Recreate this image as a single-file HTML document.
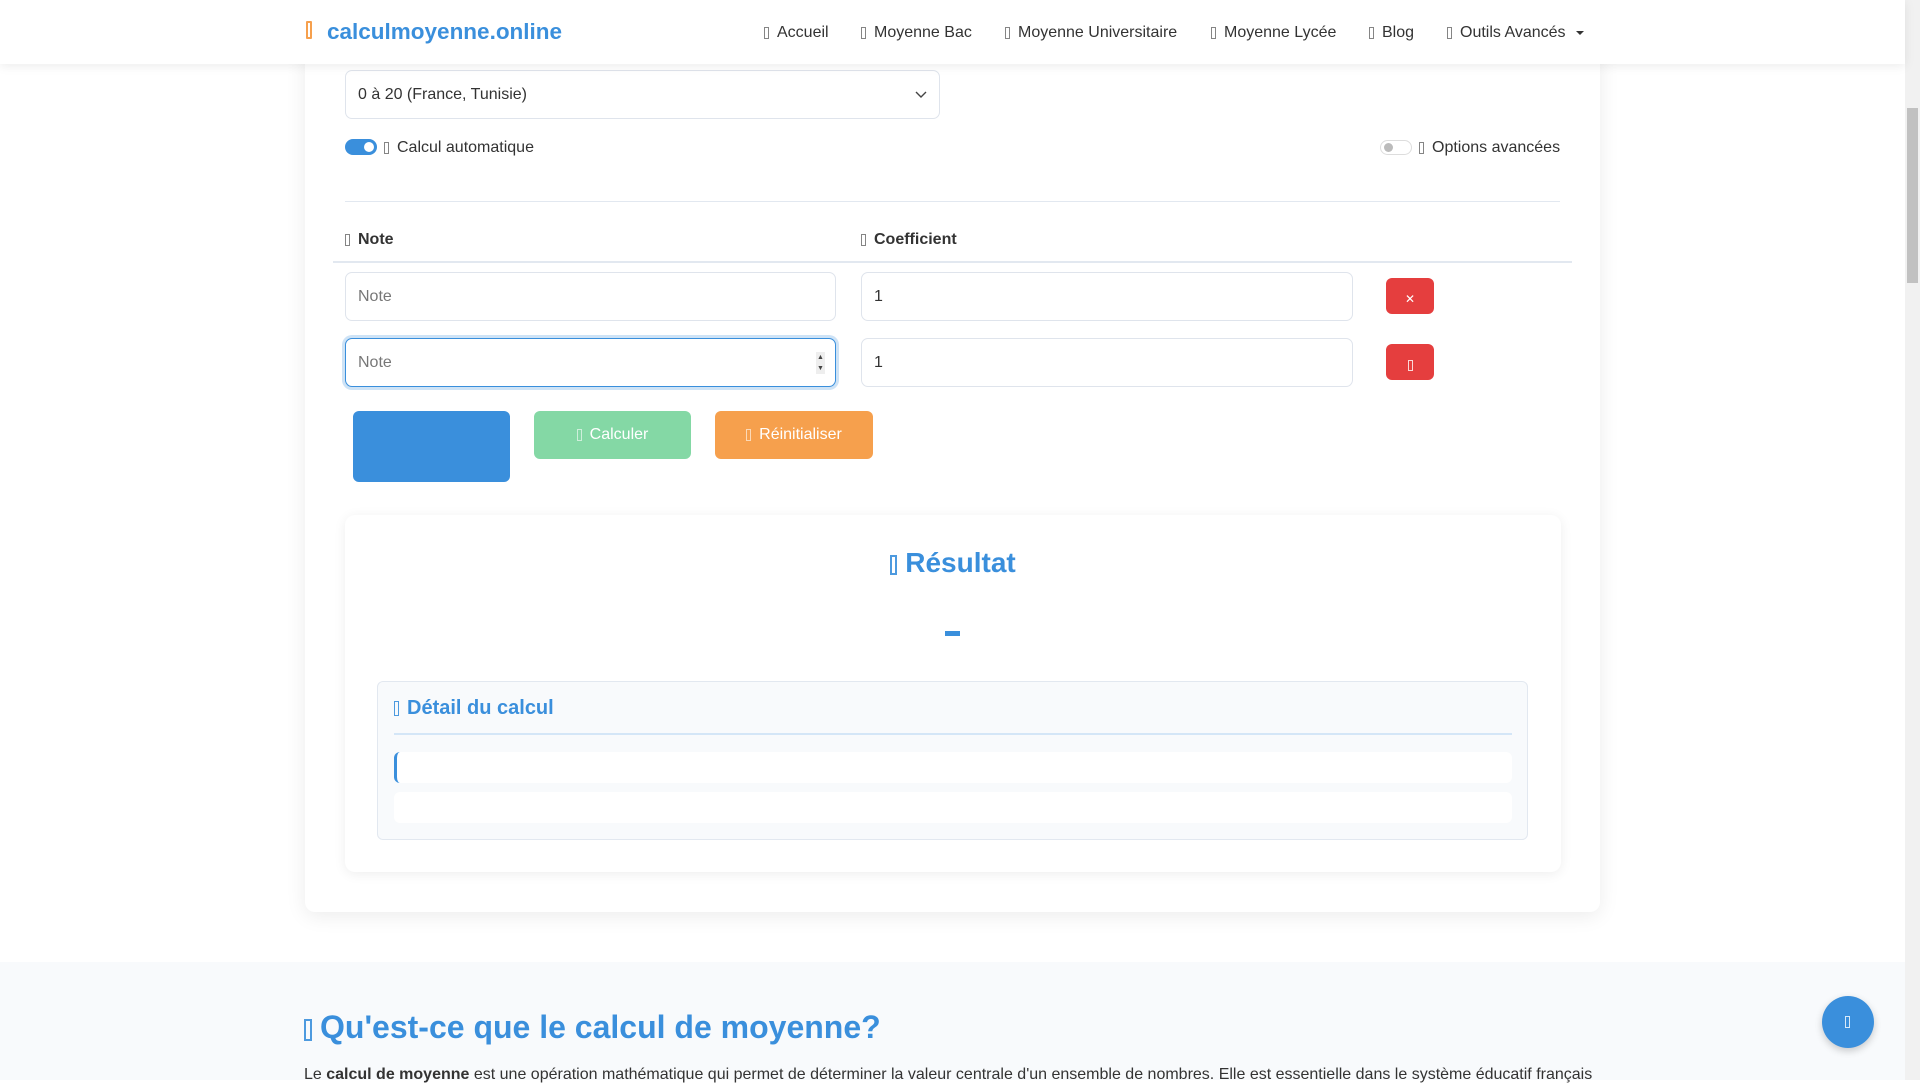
<!DOCTYPE html>
<html><head><meta charset="utf-8"><style>
*{box-sizing:border-box;margin:0;padding:0}
body{width:1920px;height:1080px;overflow:hidden;background:#fff;font-family:"Liberation Sans",sans-serif;color:#333;position:relative}
.a{position:absolute}
.ic{display:inline-block;width:5px;height:12px;border:1px solid currentColor;vertical-align:middle;margin-right:8px;opacity:.6}
.inp{position:absolute;border:1px solid #dfe4ec;border-radius:7px;background:#fff;font-size:17px;padding-left:12px;padding-top:1px;display:flex;align-items:center;color:#777}
.btn{position:absolute;border-radius:6px;color:#fff;font-size:17px;display:flex;align-items:center;justify-content:center}
.del{position:absolute;width:48px;height:36px;background:#e53e3e;border-radius:6px;color:#fff;font-size:12px;display:flex;align-items:center;justify-content:center;padding-top:6px}
.nv{position:absolute;top:24px;font-size:16px;white-space:nowrap}
</style></head><body>
<div class="a" style="left:0;top:0;width:1905px;height:64px;background:#fff;box-shadow:0 2px 10px rgba(0,0,0,.08);z-index:5">
 <div class="a" style="left:306px;top:21px;width:6px;height:18px;border:2px solid #f6a04d;border-radius:1px"></div>
 <div class="a" style="left:327px;top:19px;font-size:22.5px;font-weight:bold;color:#3a8fdc">calculmoyenne.online</div>
 <div class="nv" style="left:764px"><span class="ic"></span>Accueil</div>
 <div class="nv" style="left:861px"><span class="ic"></span>Moyenne Bac</div>
 <div class="nv" style="left:1005px"><span class="ic"></span>Moyenne Universitaire</div>
 <div class="nv" style="left:1211px"><span class="ic"></span>Moyenne Lycée</div>
 <div class="nv" style="left:1369px"><span class="ic"></span>Blog</div>
 <div class="nv" style="left:1447px"><span class="ic"></span>Outils Avancés <span style="display:inline-block;border:4px solid transparent;border-top-color:#333;vertical-align:middle;margin:4px 0 0 6px"></span></div>
</div>
<div class="a" style="left:0;top:962px;width:1905px;height:118px;background:#f8fafc"></div>
<div class="a" style="left:305px;top:0;width:1295px;height:912px;background:#fff;border-radius:10px;box-shadow:0 4px 20px rgba(0,0,0,.08)"></div>
<div class="inp" style="left:345px;top:70px;width:595px;height:49px;color:#333;font-size:16px">0 à 20 (France, Tunisie)
 <svg class="a" style="right:12px;top:20px" width="12" height="8" viewBox="0 0 12 8"><path d="M1 1l5 5 5-5" fill="none" stroke="#444" stroke-width="1.4"/></svg></div>
<div class="a" style="left:345px;top:139px;width:32px;height:16px;border-radius:8px;background:#3a8fdc"><div class="a" style="right:3px;top:3px;width:10px;height:10px;border-radius:50%;background:#fff"></div></div>
<div class="a" style="left:384px;top:139px;font-size:16px"><span class="ic"></span>Calcul automatique</div>
<div class="a" style="left:1380px;top:140px;width:32px;height:15px;border-radius:8px;border:1px solid #ddd"><div class="a" style="left:3px;top:2px;width:9px;height:9px;border-radius:50%;background:#bbb"></div></div>
<div class="a" style="left:1419px;top:139px;font-size:16px"><span class="ic"></span>Options avancées</div>
<div class="a" style="left:345px;top:201px;width:1215px;height:1px;background:#e2e8f0"></div>
<div class="a" style="left:345px;top:231px;font-size:16px;font-weight:bold"><span class="ic"></span>Note</div>
<div class="a" style="left:861px;top:231px;font-size:16px;font-weight:bold"><span class="ic"></span>Coefficient</div>
<div class="a" style="left:333px;top:261px;width:1239px;height:2px;background:#e2e8f0"></div>
<div class="inp" style="left:345px;top:272px;width:491px;height:49px;font-size:16px">Note</div>
<div class="inp" style="left:861px;top:272px;width:492px;height:49px;color:#333;font-size:16px">1</div>
<div class="del" style="left:1386px;top:278px">✕</div>
<div class="inp" style="left:345px;top:338px;width:491px;height:49px;border:1px solid #3a8fdc;box-shadow:0 0 0 3px rgba(58,143,220,.25);font-size:16px">Note
 <div class="a" style="right:10px;top:13px;width:9px;height:22px;background:#eee;font-size:7px;line-height:11px;text-align:center;color:#444">▲<br>▼</div></div>
<div class="inp" style="left:861px;top:338px;width:492px;height:49px;color:#333;font-size:16px">1</div>
<div class="del" style="left:1386px;top:344px"><span class="ic" style="margin:0;width:5px;height:11px;opacity:.8"></span></div>
<div class="btn" style="left:353px;top:411px;width:157px;height:71px;background:#3a8fdc"></div>
<div class="btn" style="left:534px;top:411px;width:157px;height:48px;background:#84d8a5;font-size:16px"><span class="ic"></span>Calculer</div>
<div class="btn" style="left:715px;top:411px;width:158px;height:48px;background:#f6a04d;font-size:16px"><span class="ic"></span>Réinitialiser</div>
<div class="a" style="left:345px;top:515px;width:1216px;height:357px;background:#fff;border-radius:10px;box-shadow:0 2px 12px rgba(0,0,0,.07)"></div>
<div class="a" style="left:345px;top:547px;width:1216px;text-align:center;font-size:28px;font-weight:bold;color:#3a8fdc"><span class="ic" style="width:7px;height:20px;border-width:2px;opacity:.9"></span>Résultat</div>
<div class="a" style="left:945px;top:631px;width:15px;height:5px;background:#3a8fdc"></div>
<div class="a" style="left:377px;top:681px;width:1151px;height:159px;background:#f8fafc;border:1px solid #e2e8f0;border-radius:6px"></div>
<div class="a" style="left:394px;top:697px;font-size:20px;font-weight:bold;color:#3a8fdc"><span class="ic" style="height:15px;opacity:.9"></span>Détail du calcul</div>
<div class="a" style="left:394px;top:733px;width:1118px;height:2px;background:#d4e6f7"></div>
<div class="a" style="left:394px;top:752px;width:1118px;height:31px;background:#fff;border-radius:6px;border-left:3px solid #3a8fdc"></div>
<div class="a" style="left:394px;top:792px;width:1118px;height:31px;background:#fff;border-radius:6px"></div>
<div class="a" style="left:304px;top:1009px;font-size:32px;font-weight:bold;color:#3a8fdc"><span class="ic" style="width:8px;height:22px;border-width:2px;opacity:.9"></span>Qu'est-ce que le calcul de moyenne?</div>
<div class="a" style="left:304px;top:1066px;font-size:16px;white-space:nowrap">Le <b>calcul de moyenne</b> est une opération mathématique qui permet de déterminer la valeur centrale d'un ensemble de nombres. Elle est essentielle dans le système éducatif français</div>
<div class="a" style="left:1822px;top:996px;width:52px;height:52px;border-radius:50%;background:#3a8fdc;box-shadow:0 3px 8px rgba(0,0,0,.2)"><span class="ic" style="position:absolute;left:23px;top:20px;color:#fff;margin:0;opacity:.8"></span></div>
<div class="a" style="left:1905px;top:0;width:15px;height:1080px;background:#f1f1f1"><div class="a" style="left:2px;top:108px;width:11px;height:175px;background:#c1c1c1"></div></div>
</body></html>
